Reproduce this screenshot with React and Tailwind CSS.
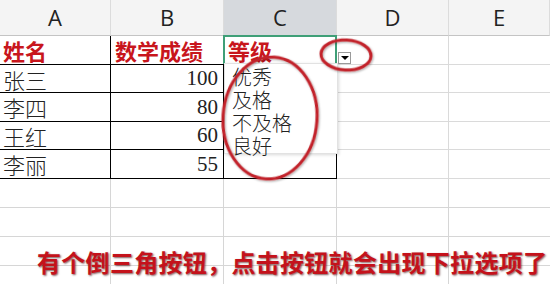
import React from "react";

const cjk = { fontFamily: '"Noto Sans CJK SC", "Noto Sans", sans-serif' };
const serifNum = { fontFamily: '"Liberation Serif", "Noto Sans CJK SC", serif' };

const rows = [
  { h: "h-[29px]", a: "姓名", b: "数学成绩", c: "等级", head: true },
  { h: "h-[28px]", a: "张三", b: "100" },
  { h: "h-[29px]", a: "李四", b: "80" },
  { h: "h-[28px]", a: "王红", b: "60" },
  { h: "h-[29px]", a: "李丽", b: "55" },
];

const emptyRows = ["h-[29px]", "h-[29px]", "h-[29px]", "h-[29px]"];

function HeaderCell({ w, label, active }) {
  return (
    <div
      className={`${w} h-full flex items-center justify-center border-r border-b border-r-[#dcdcdc] border-b-[#c4c4c4] ${
        active ? "bg-[#d6d9dd]" : "bg-[#f4f4f4]"
      } text-[22px] text-[#222]`}
      style={{ fontFamily: '"Open Sans", "Liberation Sans", sans-serif' }}
    >
      {label}
    </div>
  );
}

export default function App() {
  return (
    <div className="relative w-[550px] h-[284px] overflow-hidden bg-white">
      {/* column headers */}
      <div className="flex h-[36px]">
        <HeaderCell w="w-[111px]" label="A" />
        <HeaderCell w="w-[113px]" label="B" />
        <HeaderCell w="w-[113px]" label="C" active />
        <HeaderCell w="w-[112px]" label="D" />
        <HeaderCell w="flex-1" label="E" />
      </div>

      {/* table rows */}
      {rows.map((r, i) => (
        <div key={i} className={`flex ${r.h}`}>
          <div
            className={`w-[111px] border-r border-b border-black flex items-center pl-[3px] text-[22px] leading-none ${
              r.head ? "font-bold text-[#c8161d]" : "font-light text-[#222]"
            }`}
            style={cjk}
          >
            {r.a}
          </div>
          <div
            className={`w-[113px] border-r border-b border-black flex items-center ${
              r.head
                ? "pl-[4px] font-bold text-[#c8161d] text-[22px]"
                : "justify-end pr-[5px] text-[21px] text-[#222]"
            } leading-none`}
            style={r.head ? cjk : serifNum}
          >
            {r.b}
          </div>
          <div
            className="w-[113px] border-r border-b border-black flex items-center pl-[4px] text-[22px] leading-none font-bold text-[#c8161d]"
            style={cjk}
          >
            {r.c || ""}
          </div>
          <div className="w-[112px] border-r border-b border-[#dadada]" />
          <div className="flex-1 border-b border-[#dadada]" />
        </div>
      ))}

      {/* empty rows */}
      {emptyRows.map((h, i) => (
        <div key={`e${i}`} className={`flex ${h}`}>
          <div className="w-[111px] border-r border-b border-[#d6d6d6]" />
          <div className="w-[113px] border-r border-b border-[#d6d6d6]" />
          <div className="w-[113px] border-r border-b border-[#d6d6d6]" />
          <div className="w-[112px] border-r border-b border-[#d6d6d6]" />
          <div className="flex-1 border-b border-[#d6d6d6]" />
        </div>
      ))}

      {/* selection border around C1 */}
      <div className="absolute left-[223px] top-[35px] w-[114px] h-[29px] border-2 border-b-0 border-[#3f9f77]" />

      {/* dropdown button */}
      <div className="absolute left-[338px] top-[52px] w-[13px] h-[12px] bg-white border border-[#9a9a9a] flex items-center justify-center">
        <div className="w-0 h-0 border-l-[4px] border-r-[4px] border-t-[4px] border-l-transparent border-r-transparent border-t-black" />
      </div>

      {/* dropdown list */}
      <div
        className="absolute left-[224px] top-[63px] w-[114px] h-[91px] bg-white border border-[#e2e2e2] shadow-[1px_1px_3px_rgba(0,0,0,0.15)] pl-[7px] pt-[1px] font-light text-[#222] flex flex-col"
        style={cjk}
      >
        <div className="h-[23px] text-[20px] leading-[23px]">优秀</div>
        <div className="h-[23px] text-[20px] leading-[23px]">及格</div>
        <div className="h-[23px] text-[20px] leading-[23px]">不及格</div>
        <div className="h-[23px] text-[20px] leading-[23px]">良好</div>
      </div>

      {/* red hand-drawn ellipses */}
      <svg className="absolute left-0 top-0" width="550" height="284" viewBox="0 0 550 284">
        <defs>
          <filter id="sh" x="-20%" y="-20%" width="140%" height="140%">
            <feDropShadow dx="1" dy="1" stdDeviation="1" floodColor="#000" floodOpacity="0.35" />
          </filter>
        </defs>
        <ellipse
          cx="270"
          cy="118"
          rx="47"
          ry="61"
          transform="rotate(4 270 118)"
          fill="none"
          stroke="#c2242b"
          strokeWidth="3"
          filter="url(#sh)"
        />
        <ellipse
          cx="346"
          cy="55"
          rx="25"
          ry="15"
          transform="rotate(3 346 55)"
          fill="none"
          stroke="#c2242b"
          strokeWidth="3"
          filter="url(#sh)"
        />
      </svg>

      {/* caption */}
      <div
        className="absolute left-[37px] top-[250px] text-[24px] leading-[24px] tracking-[0.3px] font-bold text-[#c4121b] whitespace-nowrap [text-shadow:1px_1px_2px_rgba(60,0,0,0.65)]"
        style={cjk}
      >
        有个倒三角按钮，点击按钮就会出现下拉选项了
      </div>
    </div>
  );
}
